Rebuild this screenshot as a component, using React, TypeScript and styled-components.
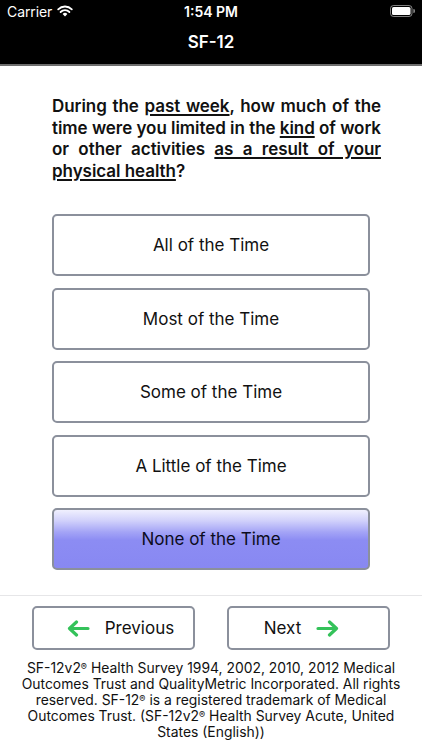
import React, { useState } from "react";
import styled, { createGlobalStyle } from "styled-components";

const Global = createGlobalStyle`
  html, body { margin: 0; padding: 0; background: #fff; }
  body { font-family: Inter, "Liberation Sans", Arial, sans-serif; -webkit-font-smoothing: antialiased; }
  * { box-sizing: border-box; }
`;

const Screen = styled.div`
  width: 422px;
  height: 750px;
  display: flex;
  flex-direction: column;
  background: #fff;
  overflow: hidden;
`;

const StatusBar = styled.div`
  height: 22px;
  background: #000;
  color: #fff;
  display: grid;
  grid-template-columns: 1fr auto 1fr;
  align-items: center;
  padding: 0 7px 0 7px;
  font-size: 14px;
`;

const Carrier = styled.div`
  display: flex;
  align-items: center;
  gap: 5px;
  font-weight: 400;
  letter-spacing: -0.1px;
`;

const Time = styled.div`
  font-weight: 600;
  font-size: 14px;
`;

const BatteryWrap = styled.div`
  justify-self: end;
  display: flex;
  align-items: center;
`;

const NavBar = styled.div`
  background: #000;
  color: #fff;
  display: flex;
  align-items: center;
  justify-content: center;
  font-size: 17px;
  font-weight: 600;
  border-bottom: 2px solid #6e6e6e;
  height: 44px;
  padding-bottom: 2px;
`;

const Question = styled.p`
  margin: 30px 41px 0 52px;
  font-size: 17px;
  font-weight: 600;
  line-height: 21.6px;
  text-align: justify;
  color: #111;
  letter-spacing: -0.05px;
`;

const U = styled.span`
  text-decoration: underline;
  text-decoration-thickness: 1.5px;
  text-underline-offset: 2px;
`;

const Options = styled.div`
  display: flex;
  flex-direction: column;
  gap: 11.5px;
  margin: 32px 52px 0 52px;
`;

const Option = styled.button<{ $selected: boolean }>`
  height: 62px;
  width: 100%;
  border: 2px solid #8b909c;
  border-radius: 5px;
  font-family: inherit;
  font-size: 17px;
  color: ${(p) => (p.$selected ? "#0c0c20" : "#111")};
  background: ${(p) =>
    p.$selected
      ? "linear-gradient(to bottom, #f0f0fe 0%, #d2d2fb 18%, #a4a4f6 38%, #8c8cf3 52%, #8888f2 100%)"
      : "#fff"};
  cursor: pointer;
  padding: 0;
`;

const Divider = styled.div`
  margin-top: 25px;
  height: 1px;
  background: #e6e6e8;
`;

const NavButtons = styled.div`
  display: flex;
  justify-content: space-between;
  padding: 10px 32px 0 32px;
`;

const NavButton = styled.button<{ $side: "left" | "right" }>`
  width: 163px;
  height: 44px;
  border: 2px solid #8b909c;
  border-radius: 5px;
  background: #fff;
  display: flex;
  align-items: center;
  justify-content: center;
  gap: 15px;
  font-family: inherit;
  font-size: 17px;
  color: #111;
  padding: ${(p) => (p.$side === "left" ? "0 0 0 14px" : "0 14px 0 0")};
  cursor: pointer;
`;

const Footer = styled.p`
  margin: 10px 8px 0 8px;
  text-align: center;
  font-size: 13.9px;
  line-height: 16px;
  color: #111;
`;

const Reg = styled.span`
  font-size: 0.66em;
  vertical-align: 0.35em;
  line-height: 0;
`;

const Wifi = () => (
  <svg width="16" height="12" viewBox="0 0 16 12">
    <path d="M8 11.5 L5.6 9 A3.4 3.4 0 0 1 10.4 9 Z" fill="#fff" />
    <path d="M3.6 7 A6.2 6.2 0 0 1 12.4 7" stroke="#fff" strokeWidth="1.8" fill="none" strokeLinecap="round" />
    <path d="M1.2 4.3 A9.6 9.6 0 0 1 14.8 4.3" stroke="#fff" strokeWidth="1.8" fill="none" strokeLinecap="round" />
  </svg>
);

const Battery = () => (
  <svg width="25" height="12" viewBox="0 0 25 12">
    <rect x="0.5" y="0.5" width="21.5" height="11" rx="3" stroke="#fff" strokeOpacity="0.5" fill="none" />
    <rect x="2" y="2" width="18.5" height="8" rx="1.6" fill="#fff" />
    <path d="M23.3 4 v4 a1.6 1.6 0 0 0 0 -4 Z" fill="#fff" fillOpacity="0.5" />
  </svg>
);

const Arrow = ({ dir }: { dir: "left" | "right" }) => (
  <svg
    width="23"
    height="17"
    viewBox="0 0 23 17"
    style={{ transform: dir === "right" ? "scaleX(-1)" : undefined }}
  >
    <path
      d="M21 8.5 H3 M9.5 2 L2.5 8.5 L9.5 15"
      stroke="#34c25a"
      strokeWidth="3.2"
      fill="none"
      strokeLinecap="round"
      strokeLinejoin="round"
    />
  </svg>
);

const options = [
  "All of the Time",
  "Most of the Time",
  "Some of the Time",
  "A Little of the Time",
  "None of the Time",
];

export default function App() {
  const [selected, setSelected] = useState(4);
  return (
    <>
      <Global />
      <Screen>
        <StatusBar>
          <Carrier>
            Carrier <Wifi />
          </Carrier>
          <Time>1:54 PM</Time>
          <BatteryWrap>
            <Battery />
          </BatteryWrap>
        </StatusBar>
        <NavBar>SF-12</NavBar>
        <Question>
          During the <U>past week</U>, how much of the time were you limited in the <U>kind</U> of work or other
          activities <U>as a result of your physical health</U>?
        </Question>
        <Options>
          {options.map((o, i) => (
            <Option key={o} $selected={i === selected} onClick={() => setSelected(i)}>
              {o}
            </Option>
          ))}
        </Options>
        <Divider />
        <NavButtons>
          <NavButton $side="left">
            <Arrow dir="left" />
            Previous
          </NavButton>
          <NavButton $side="right">
            Next
            <Arrow dir="right" />
          </NavButton>
        </NavButtons>
        <Footer>
          SF-12v2<Reg>®</Reg> Health Survey 1994, 2002, 2010, 2012 Medical
          <br />
          Outcomes Trust and QualityMetric Incorporated. All rights
          <br />
          reserved. SF-12<Reg>®</Reg> is a registered trademark of Medical
          <br />
          Outcomes Trust. (SF-12v2<Reg>®</Reg> Health Survey Acute, United
          <br />
          States (English))
        </Footer>
      </Screen>
    </>
  );
}
